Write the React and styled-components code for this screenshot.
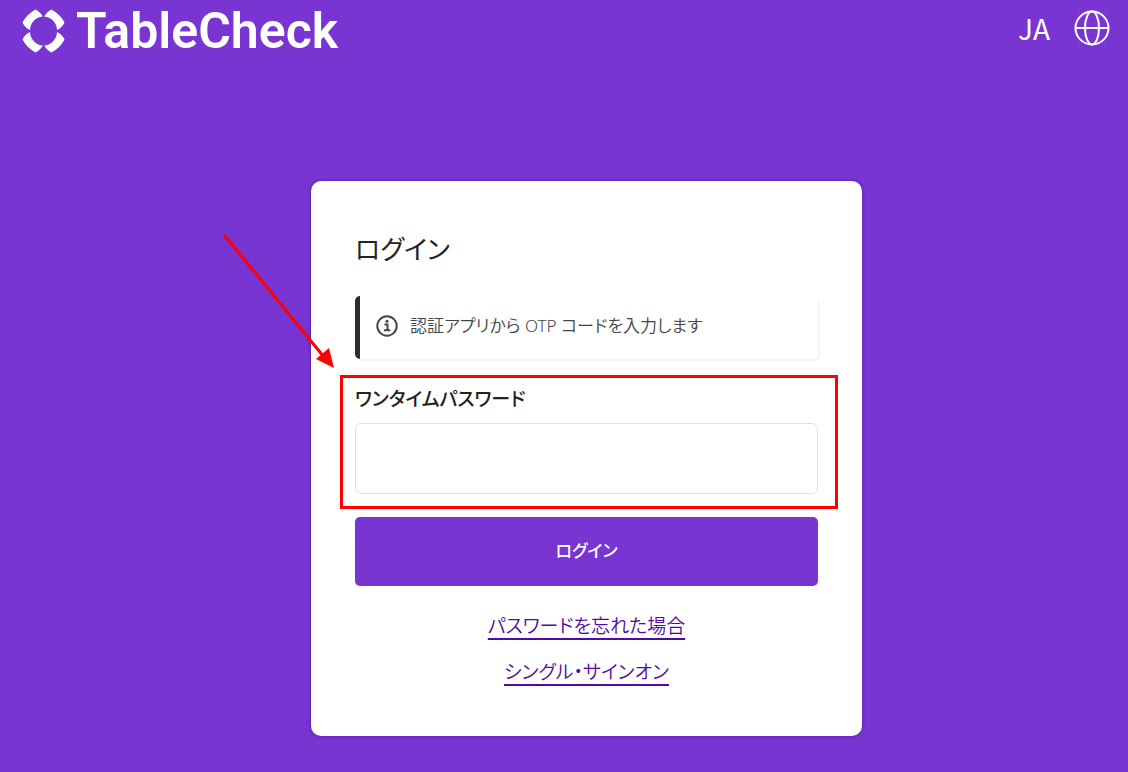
import { useState } from 'react';
import styled, { createGlobalStyle } from 'styled-components';

const GlobalStyle = createGlobalStyle`
  * {
    box-sizing: border-box;
  }
  body {
    margin: 0;
    background: #7935d2;
    color: #222;
    font-family: 'Noto Sans', 'Noto Sans CJK JP', sans-serif;
    font-feature-settings: 'palt';
  }
`;

const Page = styled.div`
  min-height: 100vh;
`;

const Header = styled.header`
  display: flex;
  align-items: center;
  justify-content: space-between;
  height: 60px;
  padding: 0 18px 0 22px;
  color: #fff;
`;

const Logo = styled.a`
  display: flex;
  align-items: center;
  gap: 10px;
  padding-top: 2px;
  color: inherit;
  font-family: Roboto, sans-serif;
  font-size: 50px;
  font-weight: 600;
  line-height: 60px;
  text-decoration: none;
`;

const Language = styled.button`
  display: flex;
  align-items: center;
  gap: 24px;
  padding: 0 0 4px;
  border: none;
  background: none;
  color: inherit;
  font-family: 'Noto Sans CJK JP', sans-serif;
  font-size: 28px;
  line-height: 40px;
  cursor: pointer;
`;

const Main = styled.main`
  display: flex;
  justify-content: center;
  padding: 121px 0 36px 45px;
`;

const Card = styled.form`
  width: 100%;
  max-width: 551px;
  padding: 44px 44px 41px;
  border-radius: 10px;
  background: #fff;
  box-shadow: 0 0 4px rgba(60, 0, 150, 0.6);
`;

const Title = styled.h1`
  margin: 0 0 23px;
  font-size: 26px;
  font-weight: 400;
  line-height: 48px;
`;

const Notice = styled.div`
  display: flex;
  align-items: center;
  gap: 12px;
  min-height: 63px;
  margin-bottom: 20px;
  padding: 0 16px 4px;
  border-left: 5px solid #2b2d2e;
  border-radius: 5px;
  box-shadow: 2px 2px 0 #f5f5f5;
  color: #444;
  font-size: 17px;
  font-weight: 350;
  line-height: 28px;
`;

const Field = styled.div`
  position: relative;
  margin-bottom: 23px;
`;

const Label = styled.label`
  display: block;
  margin-bottom: 4px;
  font-size: 19px;
  font-weight: 500;
  line-height: 40px;
`;

const Input = styled.input`
  display: block;
  width: 100%;
  height: 71px;
  padding: 0 16px;
  border: 1px solid #e0e0e0;
  border-radius: 6px;
  background: #fff;
  font-family: inherit;
  font-size: 24px;
`;

const Highlight = styled.div`
  position: absolute;
  inset: -4px -20px -15px -15px;
  border: 3px solid #f00;
  pointer-events: none;
`;

const Arrow = styled.svg`
  position: absolute;
  top: -149px;
  left: -135px;
  pointer-events: none;
`;

const Submit = styled.button`
  display: block;
  width: 100%;
  height: 69px;
  padding: 0 0 4px;
  border: none;
  border-radius: 5px;
  background: #7935d2;
  color: #fff;
  font-family: inherit;
  font-feature-settings: inherit;
  font-size: 17px;
  font-weight: 500;
  cursor: pointer;
`;

const Links = styled.nav`
  display: flex;
  flex-direction: column;
  align-items: center;
  margin-top: 17px;
`;

const TextLink = styled.a`
  color: #5207a8;
  font-size: 19px;
  font-weight: 350;
  line-height: 46px;
  text-decoration: underline;
  text-decoration-thickness: 2px;
  text-underline-offset: 5px;
`;

const PETAL = 'M13.500 1.500Q18 3.500 20.800 8.500A14 14 0 0 0 8 22Q3 20 0.500 14.500Q4.500 6.500 13.500 1.500Z';

function LogoMark() {
  return (
    <svg width="44" height="46" viewBox="0 0 44 46" fill="#fff" aria-hidden="true">
      <path d={PETAL} />
      <path d={PETAL} transform="matrix(-1 0 0 1 43 0)" />
      <path d={PETAL} transform="matrix(1 0 0 -1 0 46)" />
      <path d={PETAL} transform="matrix(-1 0 0 -1 43 46)" />
    </svg>
  );
}

function GlobeIcon() {
  return (
    <svg width="36" height="36" viewBox="0 0 36 36" fill="none" stroke="#fff" strokeWidth="2" aria-hidden="true">
      <circle cx="18" cy="18" r="16.500" />
      <path d="M1.500 18H34.500" />
      <ellipse cx="18" cy="18" rx="7" ry="16.500" />
    </svg>
  );
}

function InfoIcon() {
  return (
    <svg width="22" height="22" viewBox="0 0 22 22" fill="none" stroke="#444" strokeWidth="2" aria-hidden="true">
      <circle cx="11" cy="11" r="9.700" />
      <path d="M8.500 9.500H11.500V15M8 15.300H14.300" />
      <circle cx="11" cy="6.300" r="1.500" fill="#444" stroke="none" />
    </svg>
  );
}

function App() {
  const [code, setCode] = useState('');

  return (
    <Page>
      <GlobalStyle />
      <Header>
        <Logo href="#">
          <LogoMark />
          TableCheck
        </Logo>
        <Language type="button">
          JA
          <GlobeIcon />
        </Language>
      </Header>
      <Main>
        <Card onSubmit={(e) => e.preventDefault()}>
          <Title>ログイン</Title>
          <Notice>
            <InfoIcon />
            <span>認証アプリから OTP コードを入力します</span>
          </Notice>
          <Field>
            <Label htmlFor="otp">ワンタイムパスワード</Label>
            <Input
              id="otp"
              inputMode="numeric"
              autoComplete="one-time-code"
              value={code}
              onChange={(e) => setCode(e.target.value)}
            />
            <Highlight />
            <Arrow width="120" height="142" viewBox="0 0 120 142" aria-hidden="true">
              <path d="M5 6L104 127" stroke="#f00" strokeWidth="3" strokeLinecap="round" />
              <path d="M114 138L96 129L109 118Z" fill="#f00" />
            </Arrow>
          </Field>
          <Submit type="submit">ログイン</Submit>
          <Links>
            <TextLink href="#forgot">パスワードを忘れた場合</TextLink>
            <TextLink href="#sso">シングル・サインオン</TextLink>
          </Links>
        </Card>
      </Main>
    </Page>
  );
}

export default App;
